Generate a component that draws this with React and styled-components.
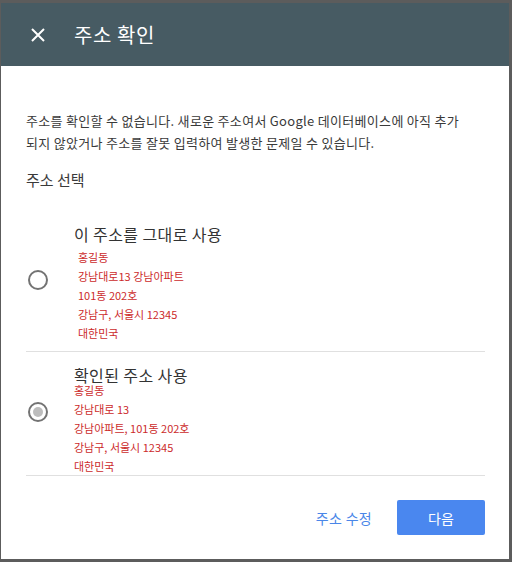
import React, { useState } from 'react';
import styled, { createGlobalStyle } from 'styled-components';

const GlobalStyle = createGlobalStyle`
  html, body {
    margin: 0;
    padding: 0;
    background: #5c5c5c;
  }
  body {
    font-family: "Noto Sans CJK KR", "Noto Sans", sans-serif;
  }
`;

const Frame = styled.div`
  width: 512px;
  height: 562px;
  box-sizing: border-box;
  padding: 3px 3px 3px 1px;
  background: #5c5c5c;
`;

const Dialog = styled.div`
  height: 100%;
  display: flex;
  flex-direction: column;
  background: #fff;
`;

const Header = styled.div`
  height: 63px;
  flex-shrink: 0;
  display: flex;
  align-items: center;
  gap: 26px;
  padding: 0 0 0 27px;
  background: #475b63;
  color: #fff;
`;

const CloseButton = styled.button`
  width: 20px;
  height: 20px;
  padding: 0;
  border: 0;
  background: none;
  display: flex;
  align-items: center;
  justify-content: center;
  cursor: pointer;
`;

const Title = styled.h1`
  margin: 0;
  font-size: 20px;
  font-weight: 400;
  letter-spacing: 0.6px;
`;

const Body = styled.div`
  padding: 44px 24px 0 25px;
  display: flex;
  flex-direction: column;
`;

const Message = styled.p`
  margin: 0;
  font-size: 13px;
  line-height: 22px;
  letter-spacing: 0.3px;
  color: #3a3a3a;
`;

const SectionLabel = styled.h2`
  margin: 15px 0 0;
  font-size: 15px;
  font-weight: 400;
  color: #3a3a3a;
`;

const OptionList = styled.div`
  display: flex;
  flex-direction: column;
`;

const Option = styled.label`
  display: flex;
  align-items: center;
  gap: 26px;
  padding: ${(p) => p.$pad};
  border-bottom: 1px solid #e0e0e0;
  cursor: pointer;
`;

const Radio = styled.span`
  width: 16px;
  height: 16px;
  flex-shrink: 0;
  margin: 0 0 ${(p) => p.$lift * 2}px 2px;
  border: 2px solid #737373;
  border-radius: 50%;
  display: flex;
  align-items: center;
  justify-content: center;

  &::after {
    content: '';
    width: 10px;
    height: 10px;
    border-radius: 50%;
    background: #bdbdbd;
    display: ${(p) => (p.$checked ? 'block' : 'none')};
  }
`;

const OptionText = styled.div`
  display: flex;
  flex-direction: column;
`;

const OptionTitle = styled.div`
  font-size: 16px;
  line-height: 16px;
  color: #333;
  letter-spacing: 0.4px;
`;

const Address = styled.div`
  margin: ${(p) => p.$margin};
  display: flex;
  flex-direction: column;
  gap: 5px;
`;

const AddressLine = styled.span`
  font-size: 11px;
  line-height: 14px;
  color: #cc2b2b;
`;

const Footer = styled.div`
  display: flex;
  justify-content: flex-end;
  align-items: center;
  gap: 25px;
  padding: 24px 24px 0 0;
`;

const TextButton = styled.button`
  border: 0;
  background: none;
  padding: 0;
  font-family: inherit;
  font-size: 14px;
  letter-spacing: 0.3px;
  color: #4a86e8;
  cursor: pointer;
`;

const PrimaryButton = styled.button`
  width: 88px;
  height: 35px;
  border: 0;
  border-radius: 2px;
  background: #4a87ef;
  color: #fff;
  font-family: inherit;
  font-size: 14px;
  cursor: pointer;
`;

const options = [
  {
    id: 'original',
    title: '이 주소를 그대로 사용',
    lines: ['홍길동', '강남대로13 강남아파트', '101동 202호', '강남구, 서울시 12345', '대한민국'],
    pad: '36px 0 11px',
    addrMargin: '8px 0 0 4px',
    lift: 3,
  },
  {
    id: 'verified',
    title: '확인된 주소 사용',
    lines: ['홍길동', '강남대로 13', '강남아파트, 101동 202호', '강남구, 서울시 12345', '대한민국'],
    pad: '15px 0 2px',
    addrMargin: '0',
    lift: 8,
  },
];

export default function App() {
  const [selected, setSelected] = useState('verified');

  return (
    <>
      <GlobalStyle />
      <Frame>
        <Dialog>
          <Header>
            <CloseButton aria-label="닫기">
              <svg width="14" height="14" viewBox="0 0 14 14">
                <path d="M1 1L13 13M13 1L1 13" stroke="#fff" strokeWidth="2" />
              </svg>
            </CloseButton>
            <Title>주소 확인</Title>
          </Header>
          <Body>
            <Message>
              주소를 확인할 수 없습니다. 새로운 주소여서 Google 데이터베이스에 아직 추가
              <br />
              되지 않았거나 주소를 잘못 입력하여 발생한 문제일 수 있습니다.
            </Message>
            <SectionLabel>주소 선택</SectionLabel>
            <OptionList>
              {options.map((o) => (
                <Option key={o.id} $pad={o.pad} onClick={() => setSelected(o.id)}>
                  <Radio $checked={selected === o.id} $lift={o.lift} />
                  <OptionText>
                    <OptionTitle>{o.title}</OptionTitle>
                    <Address $margin={o.addrMargin}>
                      {o.lines.map((l) => (
                        <AddressLine key={l}>{l}</AddressLine>
                      ))}
                    </Address>
                  </OptionText>
                </Option>
              ))}
            </OptionList>
          </Body>
          <Footer>
            <TextButton>주소 수정</TextButton>
            <PrimaryButton>다음</PrimaryButton>
          </Footer>
        </Dialog>
      </Frame>
    </>
  );
}
